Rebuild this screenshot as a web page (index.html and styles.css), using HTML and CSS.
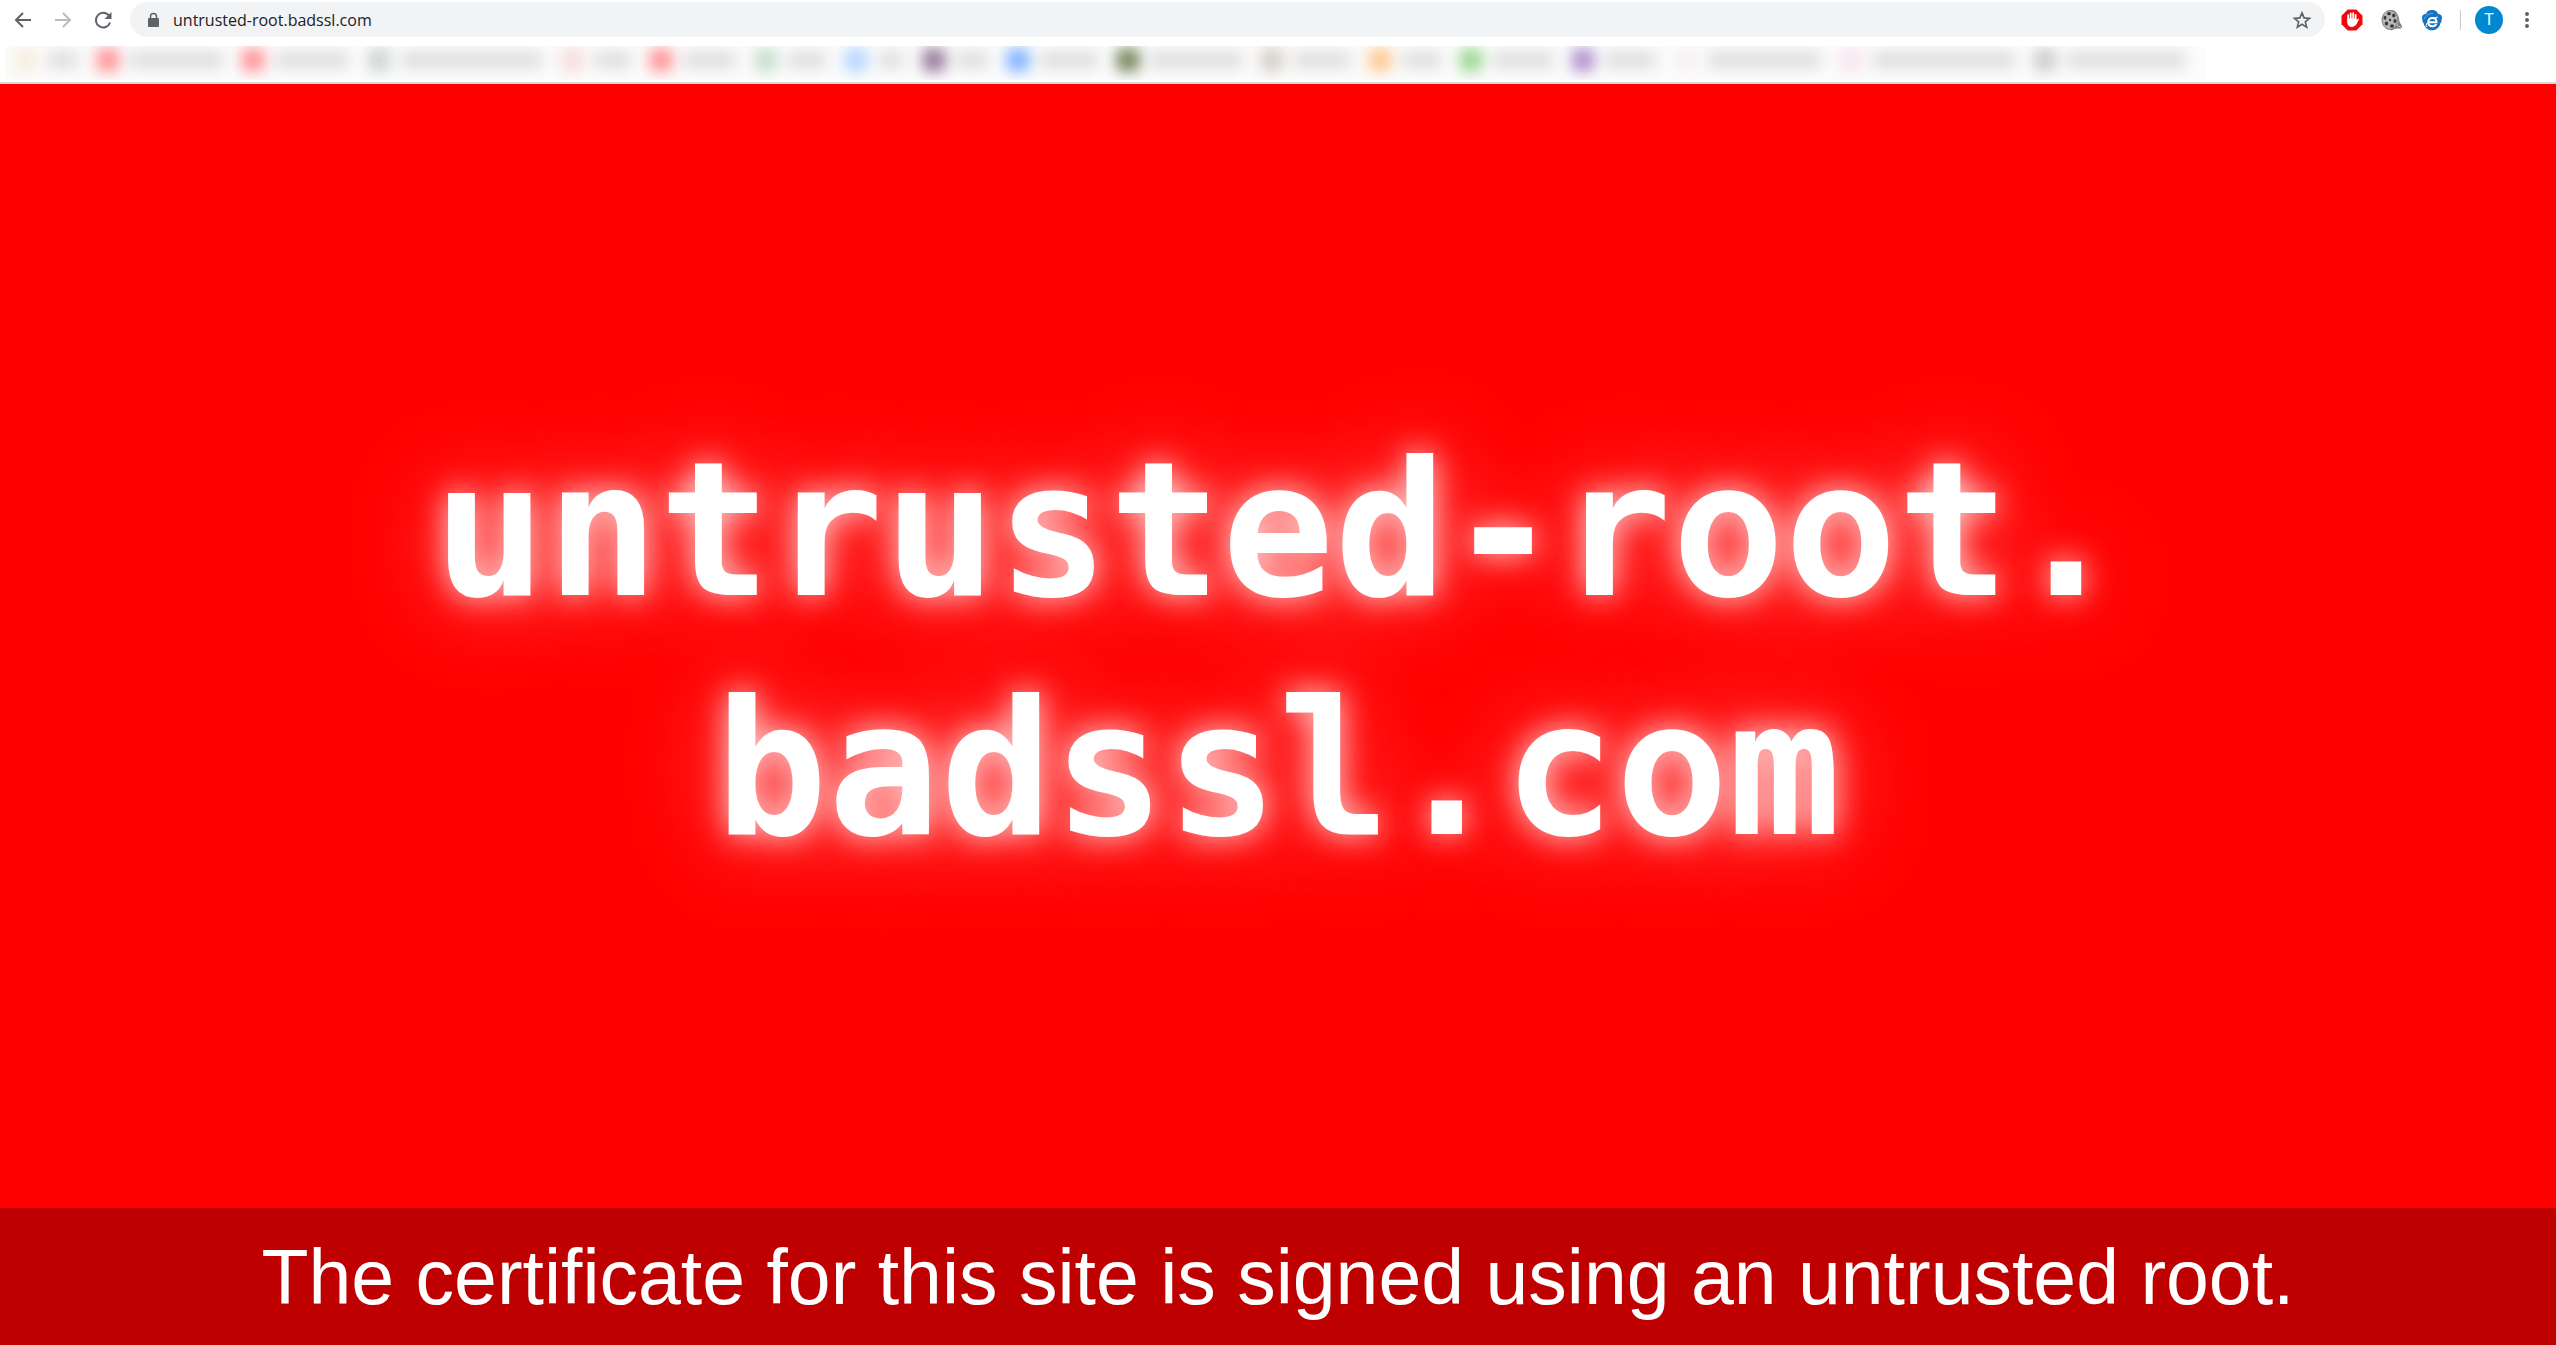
FILE: index.html
```html
<!DOCTYPE html>
<html lang="en">
<head>
<meta charset="utf-8">
<meta name="viewport" content="width=device-width, initial-scale=1">
<title>untrusted-root.badssl.com</title>
<link rel="stylesheet" href="styles.css">
</head>
<body>
<header class="chrome">
  <div class="toolbar">
    <nav class="nav" aria-label="History">
      <button class="tool" type="button" aria-label="Back">
        <svg width="24" height="24" viewBox="0 0 24 24" fill="none" stroke="#5f6368" stroke-width="2"><path d="M20 12H5M12 5l-7 7 7 7"/></svg>
      </button>
      <button class="tool" type="button" aria-label="Forward">
        <svg width="24" height="24" viewBox="0 0 24 24" fill="none" stroke="#babcbe" stroke-width="2"><path d="M4 12h15M12 5l7 7-7 7"/></svg>
      </button>
      <button class="tool" type="button" aria-label="Reload">
        <svg width="24" height="24" viewBox="0 0 24 24"><path d="M18 7.700A7.300 7.300 0 1 0 19.100 14.500" fill="none" stroke="#5f6368" stroke-width="2"/><path d="M20.500 4v7h-7z" fill="#5f6368"/></svg>
      </button>
    </nav>
    <div class="omnibox">
      <svg class="lock" width="12" height="16" viewBox="0 0 12 16"><rect x="1" y="6" width="11" height="9" rx="1" fill="#5f6368"/><path d="M3.500 6V4.500a3 3 0 0 1 6 0V6" fill="none" stroke="#5f6368" stroke-width="1.500"/></svg>
      <input class="address" type="text" aria-label="Address" value="untrusted-root.badssl.com">
      <button class="tool" type="button" aria-label="Bookmark this page">
        <svg width="20" height="20" viewBox="0 0 24 24" fill="none" stroke="#5f6368" stroke-width="2" stroke-linejoin="miter"><path d="M12 3.500l2.500 6 6.500.5-5 4.200 1.600 6.400L12 17.200l-5.600 3.400L8 14.200 3 10l6.500-.5z"/></svg>
      </button>
    </div>
    <div class="extensions">
      <button class="tool" type="button" aria-label="Ad blocker">
        <svg width="22" height="22" viewBox="0 0 22 22"><path d="M6.700.5h8.600l6.200 6.200v8.600l-6.200 6.200H6.700L.5 15.300V6.700z" fill="#ee0a0c"/><path d="M7.200 13V6.200M9.700 11V4.400M12.200 11V4.200M14.600 12V5.800" stroke="#fff" stroke-width="1.800" stroke-linecap="round"/><path d="M6.300 9.500h9.200v1.800l1-1.300q1.200-.8 1.600.3l-2.600 5q-1.400 2.700-4.300 2.700-4.900 0-4.900-5z" fill="#fff"/></svg>
      </button>
      <button class="tool" type="button" aria-label="Film reel">
        <svg width="22" height="22" viewBox="0 0 22 22"><path d="M9 1l4 .500q5 3 5.500 11.500l2.500 4q.5 2-2 2.500h-4l-5 2z" fill="#777"/><path d="M15 4q3 5 1.500 13l4 1" fill="none" stroke="#ccc"/><ellipse cx="9" cy="11" rx="8" ry="9.500" fill="#b8b8b8" stroke="#808080"/><g fill="#383838"><ellipse cx="8" cy="4.700" rx="2" ry="1.600"/><ellipse cx="12.800" cy="6.500" rx="1.600" ry="1.900"/><ellipse cx="4" cy="8.800" rx="1.500" ry="2"/><ellipse cx="14" cy="12" rx="1.500" ry="2"/><ellipse cx="5.500" cy="14.500" rx="1.700" ry="2"/><ellipse cx="11" cy="17" rx="2" ry="1.700"/><circle cx="9" cy="11" r="1.200"/></g></svg>
      </button>
      <button class="tool" type="button" aria-label="IE Tab">
        <svg width="22" height="22" viewBox="0 0 22 22"><path d="M1 9Q1 5 5 5q1-4 6-4t6 4q4 0 4 4l-1 5H2z" fill="#1673c2"/><circle cx="11" cy="13" r="8.500" fill="#1673c2"/><path d="M3 10q3-6 9-5.500" fill="none" stroke="#69aee3" stroke-width="1"/><path d="M7.500 13.200h8q0-4.200-4-4.200t-4.300 4.300q0 4 4.300 4 2.800 0 3.700-2.300" fill="none" stroke="#fff" stroke-width="2"/><path d="M6 18q-2-.5 0-4M14 8.500q3-1 3.200.5" fill="none" stroke="#fff"/></svg>
      </button>
      <span class="divider"></span>
      <button class="avatar" type="button">T</button>
      <button class="tool" type="button" aria-label="Menu">
        <svg width="4" height="18" viewBox="0 0 4 18" fill="#5f6368"><circle cx="2" cy="3" r="2"/><circle cx="2" cy="9" r="2"/><circle cx="2" cy="15" r="2"/></svg>
      </button>
    </div>
  </div>
  <nav class="bookmarks" aria-label="Bookmarks">
    <a href="#" class="mark cream" style="width:82px"><i></i><b></b></a>
    <a href="#" class="mark red" style="width:145px"><i></i><b></b></a>
    <a href="#" class="mark red" style="width:126px"><i></i><b></b></a>
    <a href="#" class="mark sage" style="width:193px"><i></i><b></b></a>
    <a href="#" class="mark rose" style="width:89px"><i></i><b></b></a>
    <a href="#" class="mark red" style="width:105px"><i></i><b></b></a>
    <a href="#" class="mark mint" style="width:90px"><i></i><b></b></a>
    <a href="#" class="mark sky" style="width:78px"><i></i><b></b></a>
    <a href="#" class="mark plum" style="width:84px"><i></i><b></b></a>
    <a href="#" class="mark blue" style="width:110px"><i></i><b></b></a>
    <a href="#" class="mark olive" style="width:144px"><i></i><b></b></a>
    <a href="#" class="mark taupe" style="width:108px"><i></i><b></b></a>
    <a href="#" class="mark orange" style="width:91px"><i></i><b></b></a>
    <a href="#" class="mark green" style="width:112px"><i></i><b></b></a>
    <a href="#" class="mark violet" style="width:103px"><i></i><b></b></a>
    <a href="#" class="mark blush" style="width:165px"><i></i><b></b></a>
    <a href="#" class="mark pink" style="width:194px"><i></i><b></b></a>
    <a href="#" class="mark gray" style="width:170px"><i></i><b></b></a>
  </nav>
</header>
<main class="content">
  <h1 class="host">untrusted-root.<br>badssl.com</h1>
</main>
<footer class="notice">The certificate for this site is signed using an untrusted root.</footer>
</body>
</html>
```
FILE: styles.css
```css
* {
  box-sizing: border-box;
}

body {
  display: flex;
  flex-direction: column;
  min-height: 100vh;
  margin: 0;
  background: #f00;
  color: #fff;
  font-family: "Liberation Sans", Arial, sans-serif;
}

button {
  padding: 0;
  border: 0;
  background: none;
}

.chrome {
  padding-bottom: 2px;
  border-bottom: 2px solid #d5d8dc;
  background: #fff;
}

/* Toolbar */
.toolbar {
  display: flex;
  align-items: center;
  gap: 11px;
  padding: 2px 13px 9px 7px;
}

.nav,
.extensions {
  display: flex;
  align-items: center;
  gap: 8px;
}

.tool {
  display: flex;
  align-items: center;
  justify-content: center;
  width: 32px;
  height: 32px;
}

.omnibox {
  display: flex;
  flex: 1;
  align-items: center;
  height: 35px;
  padding: 0 7px 0 17px;
  border-radius: 18px;
  background: #f1f3f4;
}

.address {
  flex: 1;
  min-width: 0;
  height: 32px;
  padding: 0 0 0 14px;
  border: 0;
  outline: 0;
  background: none;
  color: #202124;
  font: 16px "Open Sans", "Noto Sans", sans-serif;
}

.divider {
  width: 1px;
  height: 20px;
  margin: 0 6px 0 4px;
  background: #c8cacd;
}

.avatar {
  width: 28px;
  height: 28px;
  border-radius: 50%;
  background: #0288d1;
  color: #fff;
  font: 16px Roboto, sans-serif;
}

/* Bookmarks, obscured for privacy */
.bookmarks {
  display: flex;
  height: 34px;
  width: 2200px;
  max-width: 100%;
  margin-left: 5px;
  padding-left: 9px;
  overflow: hidden;
  background: #fcfcfc;
}

.mark {
  display: flex;
  flex: none;
  align-items: center;
  gap: 10px;
  height: 28px;
  padding-right: 18px;
  filter: blur(7px);
}

.mark i {
  width: 24px;
  height: 24px;
  border-radius: 6px;
  background: currentColor;
}

.mark b {
  flex: 1;
  height: 18px;
  background: #e0e0e0;
}

.cream { color: #f6efe0; }
.red { color: #ff9a9e; }
.sage { color: #d0d8d4; }
.rose { color: #f7dede; }
.mint { color: #cadfce; }
.sky { color: #b8d8ff; }
.plum { color: #9c80a0; }
.blue { color: #86b6ff; }
.olive { color: #7c8b64; }
.taupe { color: #d8d1ca; }
.orange { color: #ffcb98; }
.green { color: #a0da98; }
.violet { color: #b698d0; }
.blush { color: #f8f0f3; }
.pink { color: #f7e6f0; }
.gray { color: #d0d0d0; }

/* Page */
.content {
  display: flex;
  flex: 1;
  align-items: center;
  justify-content: center;
  padding-top: 8px;
}

.host {
  margin: 0;
  font: bold 187px/239px "DejaVu Sans Mono", monospace;
  text-align: center;
  text-shadow: 0 0 32px rgba(255, 255, 255, 0.85), 0 0 96px rgba(255, 255, 255, 0.45);
}

.notice {
  padding: 25px 0 23px;
  background: #bf0000;
  font-size: 77px;
  line-height: 89px;
  text-align: center;
}
```
